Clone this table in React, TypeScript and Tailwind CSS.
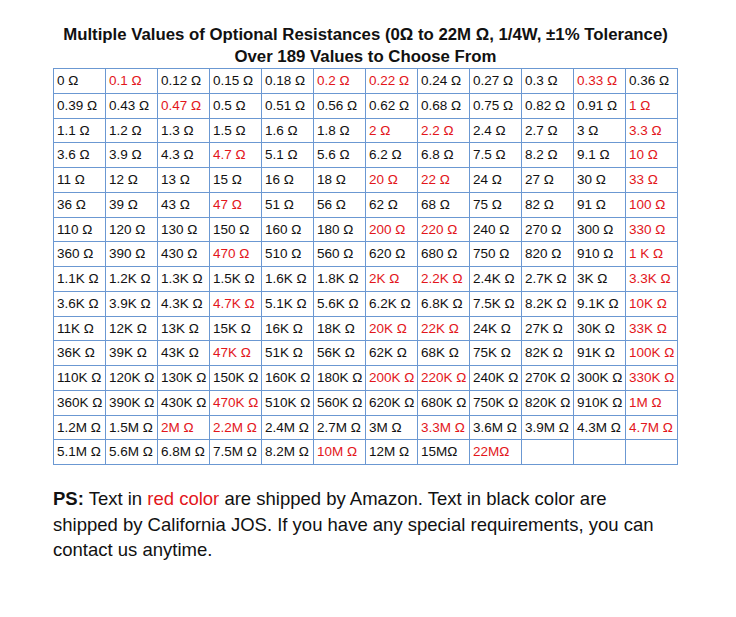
import React from 'react';

// a leading * marks a value shipped by Amazon (red)
const ROWS: string[][] = [
  ['0 Ω', '*0.1 Ω', '0.12 Ω', '0.15 Ω', '0.18 Ω', '*0.2 Ω', '*0.22 Ω', '0.24 Ω', '0.27 Ω', '0.3 Ω', '*0.33 Ω', '0.36 Ω'],
  ['0.39 Ω', '0.43 Ω', '*0.47 Ω', '0.5 Ω', '0.51 Ω', '0.56 Ω', '0.62 Ω', '0.68 Ω', '0.75 Ω', '0.82 Ω', '0.91 Ω', '*1 Ω'],
  ['1.1 Ω', '1.2 Ω', '1.3 Ω', '1.5 Ω', '1.6 Ω', '1.8 Ω', '*2 Ω', '*2.2 Ω', '2.4 Ω', '2.7 Ω', '3 Ω', '*3.3 Ω'],
  ['3.6 Ω', '3.9 Ω', '4.3 Ω', '*4.7 Ω', '5.1 Ω', '5.6 Ω', '6.2 Ω', '6.8 Ω', '7.5 Ω', '8.2 Ω', '9.1 Ω', '*10 Ω'],
  ['11 Ω', '12 Ω', '13 Ω', '15 Ω', '16 Ω', '18 Ω', '*20 Ω', '*22 Ω', '24 Ω', '27 Ω', '30 Ω', '*33 Ω'],
  ['36 Ω', '39 Ω', '43 Ω', '*47 Ω', '51 Ω', '56 Ω', '62 Ω', '68 Ω', '75 Ω', '82 Ω', '91 Ω', '*100 Ω'],
  ['110 Ω', '120 Ω', '130 Ω', '150 Ω', '160 Ω', '180 Ω', '*200 Ω', '*220 Ω', '240 Ω', '270 Ω', '300 Ω', '*330 Ω'],
  ['360 Ω', '390 Ω', '430 Ω', '*470 Ω', '510 Ω', '560 Ω', '620 Ω', '680 Ω', '750 Ω', '820 Ω', '910 Ω', '*1 K Ω'],
  ['1.1K Ω', '1.2K Ω', '1.3K Ω', '1.5K Ω', '1.6K Ω', '1.8K Ω', '*2K Ω', '*2.2K Ω', '2.4K Ω', '2.7K Ω', '3K Ω', '*3.3K Ω'],
  ['3.6K Ω', '3.9K Ω', '4.3K Ω', '*4.7K Ω', '5.1K Ω', '5.6K Ω', '6.2K Ω', '6.8K Ω', '7.5K Ω', '8.2K Ω', '9.1K Ω', '*10K Ω'],
  ['11K Ω', '12K Ω', '13K Ω', '15K Ω', '16K Ω', '18K Ω', '*20K Ω', '*22K Ω', '24K Ω', '27K Ω', '30K Ω', '*33K Ω'],
  ['36K Ω', '39K Ω', '43K Ω', '*47K Ω', '51K Ω', '56K Ω', '62K Ω', '68K Ω', '75K Ω', '82K Ω', '91K Ω', '*100K Ω'],
  ['110K Ω', '120K Ω', '130K Ω', '150K Ω', '160K Ω', '180K Ω', '*200K Ω', '*220K Ω', '240K Ω', '270K Ω', '300K Ω', '*330K Ω'],
  ['360K Ω', '390K Ω', '430K Ω', '*470K Ω', '510K Ω', '560K Ω', '620K Ω', '680K Ω', '750K Ω', '820K Ω', '910K Ω', '*1M Ω'],
  ['1.2M Ω', '1.5M Ω', '*2M Ω', '*2.2M Ω', '2.4M Ω', '2.7M Ω', '3M Ω', '*3.3M Ω', '3.6M Ω', '3.9M Ω', '4.3M Ω', '*4.7M Ω'],
  ['5.1M Ω', '5.6M Ω', '6.8M Ω', '7.5M Ω', '8.2M Ω', '*10M Ω', '12M Ω', '15MΩ', '*22MΩ', '', '', ''],
];

const App: React.FC = () => {
  return (
    <div className="w-[736px] min-h-[617px] bg-white pl-[53px] pt-[24px] font-['Liberation_Sans',Arial,sans-serif] text-[#111]">
      <div className="w-[625px]">
        <h1 className="-mx-[20px] text-center text-[16.8px] leading-[22px] font-bold">
          Multiple Values of Optional Resistances (0Ω to 22M Ω, 1/4W, ±1% Tolerance)
          <br />
          Over 189 Values to Choose From
        </h1>

        <div className="grid grid-cols-[repeat(12,51px)] auto-rows-[23.75px] gap-px bg-[#6b98d2] p-px">
          {ROWS.flat().map((v, i) => {
            const red = v.startsWith('*');
            return (
              <div
                key={i}
                className={
                  'bg-white pl-[3px] text-[13.5px] leading-[23.75px] whitespace-nowrap overflow-hidden ' +
                  (red ? 'text-[#e3161b]' : 'text-[#111]')
                }
              >
                {red ? v.slice(1) : v}
              </div>
            );
          })}
        </div>

        <p className="mt-[21px] w-[615px] text-[18.5px] leading-[25.5px] text-[#111]">
          <span className="font-bold">PS:</span> Text in <span className="text-[#e3161b]">red color</span> are shipped by
          Amazon. Text in black color are shipped by California JOS. If you have any special requirements, you can
          contact us anytime.
        </p>
      </div>
    </div>
  );
};

export default App;
